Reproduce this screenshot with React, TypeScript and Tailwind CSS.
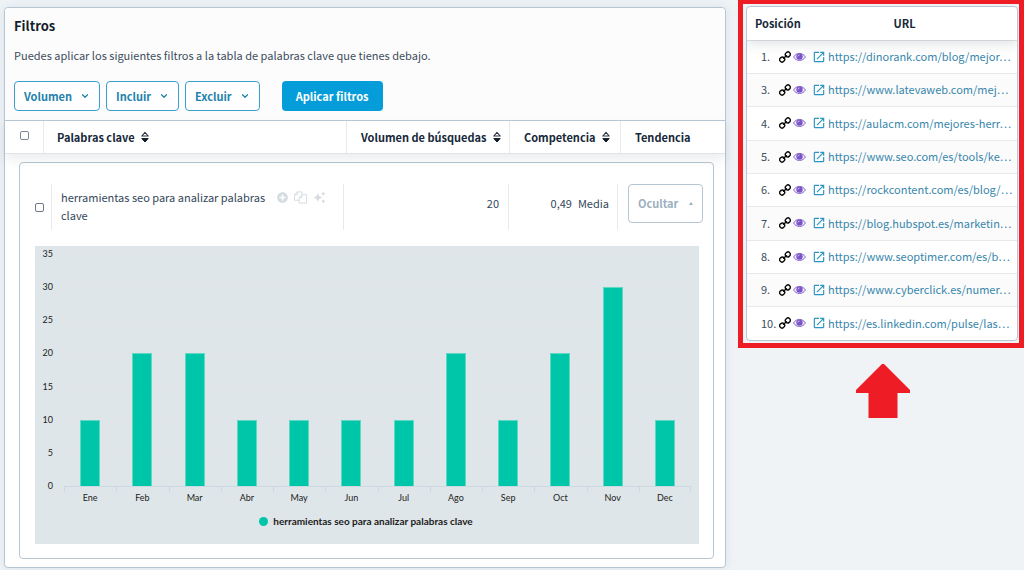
import { useState } from "react";
import { ChevronDown } from "lucide-react";
import { FaPlusCircle } from "react-icons/fa";
import { MdAutoAwesome, MdOpenInNew } from "react-icons/md";

const months = [
  { name: "Ene", value: 10 },
  { name: "Feb", value: 20 },
  { name: "Mar", value: 20 },
  { name: "Abr", value: 10 },
  { name: "May", value: 10 },
  { name: "Jun", value: 10 },
  { name: "Jul", value: 10 },
  { name: "Ago", value: 20 },
  { name: "Sep", value: 10 },
  { name: "Oct", value: 20 },
  { name: "Nov", value: 30 },
  { name: "Dec", value: 10 },
];

const results = [
  { position: 1, url: "https://dinorank.com/blog/mejor…" },
  { position: 3, url: "https://www.latevaweb.com/mej…" },
  { position: 4, url: "https://aulacm.com/mejores-herr…" },
  { position: 5, url: "https://www.seo.com/es/tools/ke…" },
  { position: 6, url: "https://rockcontent.com/es/blog/…" },
  { position: 7, url: "https://blog.hubspot.es/marketin…" },
  { position: 8, url: "https://www.seoptimer.com/es/b…" },
  { position: 9, url: "https://www.cyberclick.es/numer…" },
  { position: 10, url: "https://es.linkedin.com/pulse/las…" },
];

const MAX = 35;
const ticks = [35, 30, 25, 20, 15, 10, 5, 0];

function SortIcon() {
  return (
    <svg viewBox="0 0 8 12" className="h-3 w-2 shrink-0" aria-hidden="true">
      <path d="M.8 5 4 1.4 7.200 5Z" fill="#fff" stroke="#2a3440" strokeWidth="1.1" strokeLinejoin="round" />
      <path d="M.8 7.600h6.400L4 11Z" fill="#101c28" stroke="#101c28" strokeLinejoin="round" />
    </svg>
  );
}

function ChainIcon() {
  return (
    <svg viewBox="0 0 12 12" className="size-3" fill="none" stroke="#0b0b0b" aria-hidden="true">
      <g transform="rotate(-42 6 6)" strokeWidth="1.4">
        <rect x="-.3" y="3.7" width="5" height="4.6" rx="2.2" />
        <rect x="7.300" y="3.7" width="5" height="4.6" rx="2.2" />
        <path d="M4 6h4" strokeLinecap="round" />
      </g>
    </svg>
  );
}

function EyeIcon() {
  return (
    <svg viewBox="0 0 13 10" className="h-[10px] w-[13px]" aria-hidden="true">
      <path d="M.6 5C3.200.2 9.800.2 12.400 5 9.800 9.600 3.200 9.600.6 5Z" fill="#f4f0fc" stroke="#7a55c7" strokeWidth=".9" />
      <circle cx="6.500" cy="4.600" r="3.200" fill="#7a55c7" />
      <path d="M4.900 4.500A1.600 1.600 0 0 1 6.500 3" fill="none" stroke="#fff" strokeWidth=".6" />
    </svg>
  );
}

function FilesIcon() {
  return (
    <svg viewBox="0 0 14 14" className="h-[14px] w-[13px]" fill="none" stroke="currentColor" strokeLinejoin="round" aria-hidden="true">
      <path d="M5.500 10.500h-5v-6l3-3h5v2.500M3.500 1.500v3h-3" />
      <path d="M8.500 4.500h5v9h-8v-6ZM8.500 4.500v3h-3" />
    </svg>
  );
}

function FilterButton({ label }: { label: string }) {
  return (
    <button
      type="button"
      className="flex h-[30px] items-center gap-2 rounded border border-[#3a9fd0] bg-white px-[9px] text-[11px] font-bold text-[#2382ad]"
    >
      {label}
      <ChevronDown size={10} strokeWidth={3} />
    </button>
  );
}

function TrendChart() {
  return (
    <figure className="bg-[#dfe6e9] pt-2 pr-2 pb-[17px] pl-[6px] font-['Lato',sans-serif] text-[9px] leading-3 text-[#222]">
      <div className="flex">
        <div className="-my-[6px] flex w-3 shrink-0 flex-col justify-between pb-[18px] text-right">
          {ticks.map((tick) => (
            <span key={tick}>{tick}</span>
          ))}
        </div>
        <div className="min-w-0 flex-1 pl-[11px]">
          <div className="grid h-[233px]">
            <div className="col-start-1 row-start-1 flex flex-col">
              {ticks.slice(1).map((tick) => (
                <div key={tick} className="flex-1 border-t border-[#e2e5e7]" />
              ))}
            </div>
            <div className="col-start-1 row-start-1 grid grid-cols-12 border-b border-[#ccd9e3]">
              {months.map((month) => (
                <div key={month.name} className="flex items-end justify-center">
                  <div
                    className="w-5 border border-b-0 border-[#5fd9c4] bg-[#00c6a9]"
                    style={{ height: `${(month.value / MAX) * 100}%` }}
                  />
                </div>
              ))}
            </div>
          </div>
          <div className="grid grid-cols-12 text-center">
            {months.map((month) => (
              <div key={month.name} className="group flex flex-col">
                <span className="h-[5px] border-l border-[#ccd9e3] group-last:border-r" />
                <span>{month.name}</span>
              </div>
            ))}
          </div>
        </div>
      </div>
      <figcaption className="mt-[11px] flex items-center justify-center gap-[5px] text-[10px] font-bold text-[#1b1b1b]">
        <span className="size-[9px] rounded-full bg-[#00c6a9]" />
        herramientas seo para analizar palabras clave
      </figcaption>
    </figure>
  );
}

function KeywordPanel() {
  const [open, setOpen] = useState(true);
  return (
    <section className="min-w-0 flex-1 rounded border border-[#b6c6d2] bg-white shadow-[0_0_8px_rgba(160,180,200,0.25)]">
      <div className="rounded-t bg-[#fcfcfd] px-[9px] pt-2 pb-[9px]">
        <h1 className="text-[13px] leading-5 font-bold text-[#151f2b]">Filtros</h1>
        <p className="mt-[9px] text-[11px] leading-5 text-[#3c4d5c]">
          Puedes aplicar los siguientes filtros a la tabla de palabras clave que tienes debajo.
        </p>
        <div className="mt-4 flex gap-[6px]">
          <FilterButton label="Volumen" />
          <FilterButton label="Incluir" />
          <FilterButton label="Excluir" />
          <button type="button" className="ml-4 h-[30px] rounded bg-[#049dd9] px-[14px] text-[11px] font-bold text-white">
            Aplicar filtros
          </button>
        </div>
      </div>

      <div className="relative grid h-[34px] grid-cols-[38px_minmax(0,1fr)_163px_111px_105px] items-stretch border-y border-t-[#b6c6d2] border-b-[#dfe3e6] text-[11px] font-bold text-[#17283a] shadow-[0_6px_10px_rgba(60,70,80,0.09)]">
        <div className="flex items-center justify-center pb-1">
          <input type="checkbox" aria-label="Seleccionar todas" className="size-[9px] appearance-none rounded-[2px] border border-[#7d8896] bg-white checked:bg-[#049dd9]" />
        </div>
        <div className="flex items-center gap-[6px] border-l border-[#e6eaed] pl-[13px]">Palabras clave <SortIcon /></div>
        <div className="flex items-center gap-[6px] border-l border-[#e6eaed] pl-[14px]">Volumen de búsquedas <SortIcon /></div>
        <div className="flex items-center gap-[6px] border-l border-[#e6eaed] pl-[14px]">Competencia <SortIcon /></div>
        <div className="flex items-center border-l border-[#e6eaed] pl-[14px]">Tendencia</div>
      </div>

      <article className="mt-2 mr-[11px] mb-2 ml-[14px] rounded border border-[#b6c6d2] pr-[14px] pb-[14px] pl-[15px]">
        <div className="mt-[21px] grid h-[46px] grid-cols-[16px_minmax(0,1fr)_165px_109px_82px] text-[11px] text-[#33475b]">
          <div className="flex items-center">
            <input type="checkbox" aria-label="Seleccionar palabra clave" className="size-[9px] appearance-none rounded-[2px] border border-[#6d7888] bg-white checked:bg-[#049dd9]" />
          </div>
          <div className="flex gap-2 border-l border-[#e6eaed] pt-1 pl-[9px]">
            <p className="w-[208px] leading-[18px]">herramientas seo para analizar palabras clave</p>
            <div className="flex h-[18px] items-center gap-[6px] text-[#d3dae0]">
              <button type="button" aria-label="Añadir"><FaPlusCircle size={11} /></button>
              <button type="button" aria-label="Copiar"><FilesIcon /></button>
              <button type="button" aria-label="Generar"><MdAutoAwesome size={13} /></button>
            </div>
          </div>
          <div className="flex items-center justify-end border-l border-[#e6eaed] pr-[9px] pb-2">20</div>
          <div className="flex items-center justify-end gap-[6px] border-l border-[#e6eaed] pr-[8px] pb-2">
            <span>0,49</span>
            <span>Media</span>
          </div>
          <div className="flex items-start justify-end border-l border-[#e6eaed]">
            <button
              type="button"
              aria-expanded={open}
              onClick={() => setOpen(!open)}
              className="-mr-[4px] flex h-[39px] w-[75px] shrink-0 items-center justify-between rounded border border-[#b6c6d2] bg-white px-[9px] font-bold text-[#9db0be]"
            >
              Ocultar
              <svg viewBox="0 0 4 3" className="h-[3px] w-1" aria-hidden="true"><path d="M0 3 2 0l2 3Z" fill="currentColor" /></svg>
            </button>
          </div>
        </div>
        <div className="mt-4">{open && <TrendChart />}</div>
      </article>
    </section>
  );
}

function ResultsPanel() {
  return (
    <aside className="flex w-[286px] shrink-0 flex-col items-center">
      <div className="w-full border-5 border-t-4 border-[#ee1c24] pt-[2px] pr-px pb-[2px] pl-[3px]">
        <div className="overflow-hidden rounded border border-[#b6c6d2] bg-white text-[11px]">
          <table className="w-full table-fixed border-collapse">
            <thead className="relative shadow-[0_5px_12px_rgba(60,70,80,0.14)]">
              <tr className="h-[33px] border-b border-[#e1e6ea] text-[#17283a]">
                <th className="w-[65px] pl-2 text-left font-bold whitespace-nowrap">Posición</th>
                <th className="pr-[20px] text-center font-bold">URL</th>
              </tr>
            </thead>
            <tbody>
              {results.map((result) => (
                <tr key={result.position} className="h-[33px] border-b border-[#e6eaed] last:border-b-0 even:bg-[#fbfbfb] nth-[3n]:h-[34px]">
                  <td className="pl-[14px]">
                    <div className="flex items-center">
                      <span className="w-[18px] shrink-0 whitespace-nowrap text-[#3c4d5c]">{result.position}.</span>
                      <button type="button" aria-label="Enlaces"><ChainIcon /></button>
                      <button type="button" aria-label="Ver" className="ml-[2px]"><EyeIcon /></button>
                    </div>
                  </td>
                  <td>
                    <a href={result.url} className="flex items-center gap-[2px] whitespace-nowrap text-[#3786ab]">
                      <MdOpenInNew size={14} color="#2b95c4" className="shrink-0" />
                      {result.url}
                    </a>
                  </td>
                </tr>
              ))}
            </tbody>
          </table>
        </div>
      </div>
      <svg viewBox="0 0 54 54" className="mt-4 ml-[3px] size-[54px]" role="img" aria-label="Flecha hacia arriba">
        <path d="M26 0h2L54 26v3H41.500v25H12.500V29H0v-3Z" fill="#ee1c24" />
      </svg>
    </aside>
  );
}

export default function App() {
  return (
    <main className="flex min-h-screen items-start gap-3 bg-[#eff3f6] pl-1 font-['Noto_Sans_CJK_JP','Noto_Sans',sans-serif]">
      <div className="flex min-w-0 flex-1 pt-[7px]">
        <KeywordPanel />
      </div>
      <ResultsPanel />
    </main>
  );
}
